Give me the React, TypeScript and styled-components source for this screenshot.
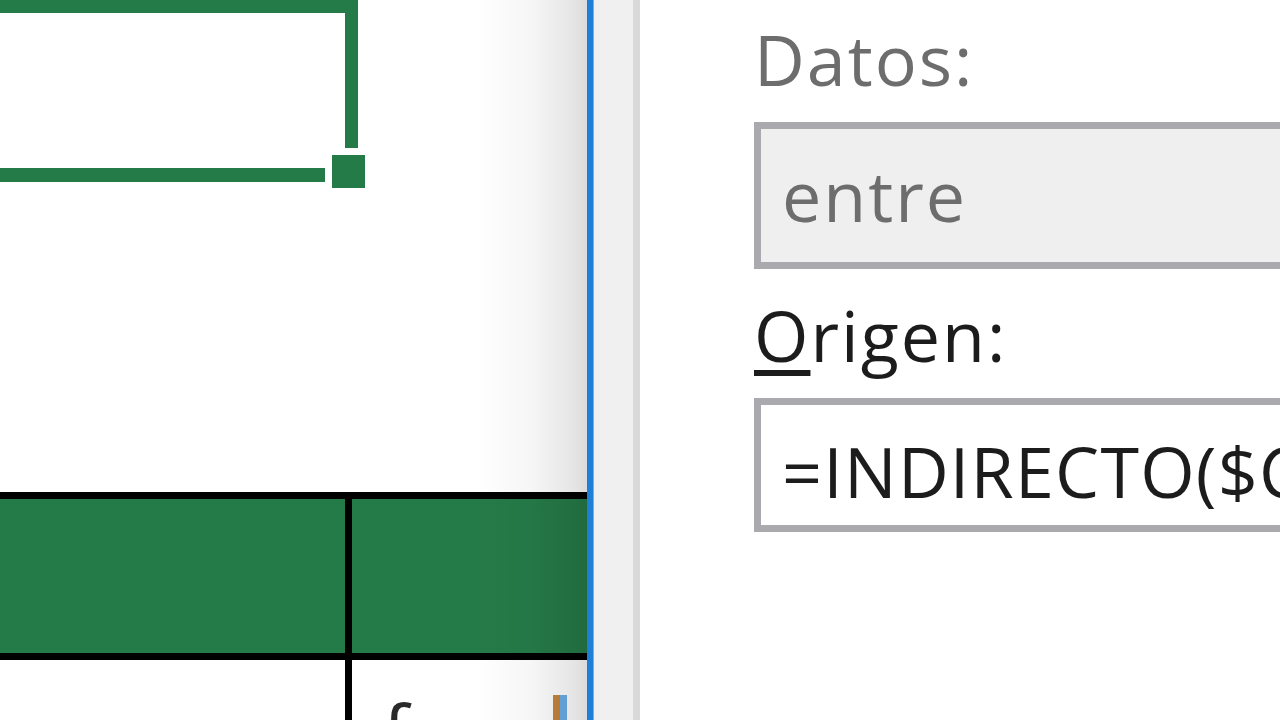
import React from "react";
import styled, { createGlobalStyle } from "styled-components";

const GREEN = "#257b48";

const Global = createGlobalStyle`
  html, body { margin: 0; padding: 0; width: 1280px; height: 720px; overflow: hidden; background: #fff; }
  #root { width: 1280px; height: 720px; }
  * { box-sizing: border-box; }
`;

const Screen = styled.div`
  display: flex;
  width: 1280px;
  height: 720px;
  overflow: hidden;
  font-family: "Open Sans", "Noto Sans", sans-serif;
`;

const Sheet = styled.div`
  position: relative;
  flex: none;
  width: 587px;
  height: 100%;
  overflow: hidden;
  background: #fff;
  display: flex;
  flex-direction: column;
`;

const SelectionFrame = styled.div`
  position: relative;
  flex: none;
  width: 358px;
  height: 182px;
  border-top: 13px solid ${GREEN};
  border-right: 13px solid ${GREEN};
  border-bottom: 14px solid ${GREEN};
`;

const FillHandle = styled.div`
  position: absolute;
  left: 325px;
  top: 135px;
  width: 47px;
  height: 47px;
  background: ${GREEN};
  border: 7px solid #fff;
`;

const Grid = styled.div`
  margin-top: 310px;
  border-top: 7px solid #000;
  display: flex;
  flex-direction: column;
`;

const Row = styled.div<{ $fill?: boolean; $h: number }>`
  display: flex;
  flex: none;
  height: ${(p) => p.$h}px;
  background: ${(p) => (p.$fill ? GREEN : "#fff")};
  border-bottom: ${(p) => (p.$fill ? "7px solid #000" : "none")};
  overflow: hidden;
`;

const CellA = styled.div`
  flex: none;
  width: 352px;
  border-right: 7px solid #000;
`;

const CellB = styled.div`
  flex: 1;
  display: flex;
  align-items: flex-start;
  padding: 34px 20px 0 31px;
  overflow: hidden;
`;

const CellGlyph = styled.span`
  font-size: 75px;
  line-height: 75px;
  color: #2a2a2a;
`;

const CaretStem = styled.span`
  margin-left: auto;
  margin-top: 1px;
  width: 14px;
  height: 40px;
  flex: none;
  background: linear-gradient(to right, #c8843c 0 50%, #6aaee8 50% 100%);
`;

const EdgeShade = styled.div`
  position: absolute;
  top: 0;
  right: 0;
  bottom: 0;
  width: 112px;
  pointer-events: none;
  background: linear-gradient(
    to right,
    rgba(0, 0, 0, 0) 0%,
    rgba(0, 0, 0, 0.035) 50%,
    rgba(0, 0, 0, 0.1) 88%,
    rgba(0, 0, 0, 0.14) 100%
  );
`;

const BlueRule = styled.div`
  flex: none;
  width: 7px;
  height: 100%;
  background: #1f7fd6;
  border-right: 1px solid #6fb0ea;
`;

const SideStrip = styled.div`
  flex: none;
  width: 46px;
  height: 100%;
  background: #f0f0f0;
  border-right: 7px solid #d9d9d9;
`;

const Dialog = styled.div`
  flex: 1;
  height: 100%;
  background: #fff;
  overflow: hidden;
  display: flex;
  flex-direction: column;
  padding: 20px 0 0 114px;
`;

const Label = styled.div<{ $dim?: boolean; $gap?: number }>`
  flex: none;
  height: 75px;
  margin-top: ${(p) => p.$gap ?? 0}px;
  font-size: 70px;
  line-height: 78px;
  letter-spacing: 2px;
  color: ${(p) => (p.$dim ? "#6d6d6d" : "#1c1c1c")};
  white-space: nowrap;
`;

const AccessKey = styled.span`
  text-decoration: underline;
  text-decoration-thickness: 6px;
  text-underline-offset: 8px;
`;

const Field = styled.div<{ $h: number; $disabled?: boolean }>`
  flex: none;
  margin-top: 27px;
  width: calc(100% + 200px);
  height: ${(p) => p.$h}px;
  border: 7px solid #a9a9ae;
  background: ${(p) => (p.$disabled ? "#efefef" : "#fff")};
  padding: 27px 0 0 21px;
  font-size: 70px;
  line-height: 78px;
  letter-spacing: 2px;
  color: ${(p) => (p.$disabled ? "#6d6d6d" : "#1c1c1c")};
  white-space: nowrap;
  overflow: hidden;
`;

const Formula = styled.span`
  letter-spacing: 1.2px;
`;

export default function App() {
  return (
    <>
      <Global />
      <Screen>
        <Sheet>
          <SelectionFrame>
            <FillHandle />
          </SelectionFrame>
          <Grid>
            <Row $fill $h={161}>
              <CellA />
              <CellB />
            </Row>
            <Row $h={60}>
              <CellA />
              <CellB>
                <CellGlyph>f</CellGlyph>
                <CaretStem />
              </CellB>
            </Row>
          </Grid>
          <EdgeShade />
        </Sheet>
        <BlueRule />
        <SideStrip />
        <Dialog>
          <Label $dim>Datos:</Label>
          <Field $h={147} $disabled>
            entre
          </Field>
          <Label $gap={27}>
            <AccessKey>O</AccessKey>rigen:
          </Label>
          <Field $h={134}>
            <Formula>=INDIRECTO($C$3)</Formula>
          </Field>
        </Dialog>
      </Screen>
    </>
  );
}
